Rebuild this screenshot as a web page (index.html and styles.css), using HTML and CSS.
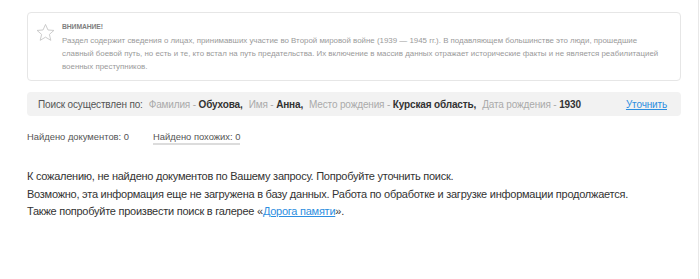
FILE: index.html
```html
<!DOCTYPE html>
<html lang="ru">
<head>
  <meta charset="utf-8">
  <title>Поиск документов</title>
  <link rel="stylesheet" href="styles.css">
</head>
<body>
  <div class="page">
    <div class="content">
      <div class="warning">
        <svg class="warning-icon" width="19" height="19" viewBox="0 0 24 24">
          <path d="M12 1.8l3.1 7 7.5.6-5.7 5 1.8 7.5L12 17.9l-6.7 4 1.8-7.5-5.7-5 7.5-.6z" fill="none" stroke="#c4c4c4" stroke-width="1.1" stroke-linejoin="miter"/>
        </svg>
        <div class="warning-body">
          <div class="warning-title">Внимание!</div>
          <div class="warning-text">Раздел содержит сведения о лицах, принимавших участие во Второй мировой войне (1939 — 1945 гг.). В подавляющем большинстве это люди, прошедшие<br>славный боевой путь, но есть и те, кто встал на путь предательства. Их включение в массив данных отражает исторические факты и не является реабилитацией<br>военных преступников.</div>
        </div>
      </div>

      <div class="search-bar">
        <div class="search-params">
          <span class="search-lead">Поиск осуществлен по:</span>
          <span class="param"><span class="param-label">Фамилия - </span><b>Обухова,</b></span>
          <span class="param"><span class="param-label">Имя - </span><b>Анна,</b></span>
          <span class="param"><span class="param-label">Место рождения - </span><b>Курская область,</b></span>
          <span class="param"><span class="param-label">Дата рождения - </span><b>1930</b></span>
        </div>
        <a class="refine" href="#">Уточнить</a>
      </div>

      <div class="counters">
        <span class="counter">Найдено документов: 0</span>
        <span class="counter counter-tab">Найдено похожих: 0</span>
      </div>

      <div class="not-found">
        <p>К сожалению, не найдено документов по Вашему запросу. Попробуйте уточнить поиск.</p>
        <p>Возможно, эта информация еще не загружена в базу данных. Работа по обработке и загрузке информации продолжается.</p>
        <p>Также попробуйте произвести поиск в галерее «<a href="#">Дорога памяти</a>».</p>
      </div>
    </div>
  </div>
</body>
</html>
```

FILE: styles.css
```css
html, body {
  margin: 0;
  padding: 0;
  background: #fff;
}

body {
  font-family: "Liberation Sans", Arial, sans-serif;
  color: #333;
}

.page {
  width: 699px;
  min-height: 279px;
  border-right: 1px solid #e8e8e8;
  box-sizing: border-box;
}

.content {
  padding: 12px 0 0 27px;
  width: 654px;
}

.warning {
  display: flex;
  gap: 7px;
  border: 1px solid #e6e6e6;
  border-radius: 4px;
  padding: 8px 8px 7px 8px;
}

.warning-icon {
  flex: none;
  margin-top: 2px;
}

.warning-title {
  font-size: 6.8px;
  font-weight: bold;
  text-transform: uppercase;
  letter-spacing: -0.1px;
  color: #808080;
  line-height: 10px;
  margin-top: 1px;
}

.warning-text {
  font-size: 7.9px;
  line-height: 13px;
  color: #9a9a9a;
  margin-top: 2px;
  white-space: nowrap;
}

.search-bar {
  display: flex;
  align-items: center;
  justify-content: space-between;
  margin-top: 11px;
  height: 24px;
  padding: 0 14px 0 11px;
  background: #f2f2f2;
  border-radius: 4px;
  font-size: 10px;
  letter-spacing: -0.15px;
}

.search-params {
  display: flex;
  gap: 6px;
  white-space: nowrap;
}

.search-lead {
  color: #555;
}

.param-label {
  color: #aaa;
}

.param b {
  color: #333;
}

.refine {
  color: #2d8ee0;
  text-decoration: underline;
}

.counters {
  display: flex;
  gap: 24px;
  margin-top: 15px;
  font-size: 9.4px;
  color: #555;
}

.counter-tab {
  border-bottom: 2px solid #dcdcdc;
  padding-bottom: 1px;
}

.not-found {
  margin-top: 23px;
  font-size: 11px;
  letter-spacing: -0.25px;
  color: #333;
  line-height: 17.5px;
}

.not-found p {
  margin: 0;
}

.not-found a {
  color: #2d8ee0;
  text-decoration: underline;
}
```
